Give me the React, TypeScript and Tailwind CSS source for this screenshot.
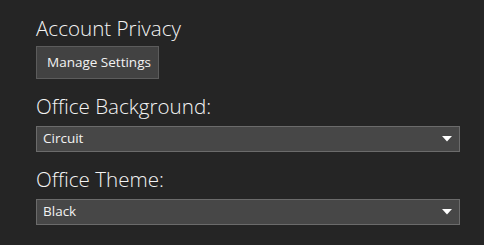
import React from "react";

function Caret() {
  return (
    <svg width="10" height="6" viewBox="0 0 10 6" className="shrink-0">
      <path d="M0 0 L10 0 L5 5.5 Z" fill="#ffffff" />
    </svg>
  );
}

function Dropdown({ value }: { value: string }) {
  return (
    <div className="flex h-[26px] w-[424px] items-center justify-between border border-[#6b6b6b] bg-[#474747] pl-[6px] pr-[7px]">
      <span className="text-[13.5px] leading-none text-[#f2f2f2]">{value}</span>
      <Caret />
    </div>
  );
}

export default function App() {
  return (
    <div
      className="flex h-[245px] w-[484px] flex-col bg-[#252525] pl-[36px] pt-[14px] text-white"
      style={{ fontFamily: '"Open Sans", "Noto Sans", sans-serif' }}
    >
      <div className="text-[20.6px] font-light leading-[28px] text-[#f4f4f4]">Account Privacy</div>
      <button className="mt-[4px] flex h-[33px] w-[123px] items-center border border-[#5c5c5c] bg-[#424242] pl-[10px] text-[13.5px] text-[#f2f2f2]">
        Manage Settings
      </button>
      <div className="mt-[13px] text-[20.6px] font-light leading-[28px] text-[#f4f4f4]">Office Background:</div>
      <div className="mt-[6px]">
        <Dropdown value="Circuit" />
      </div>
      <div className="mt-[13px] text-[20.6px] font-light leading-[28px] text-[#f4f4f4]">Office Theme:</div>
      <div className="mt-[6px]">
        <Dropdown value="Black" />
      </div>
    </div>
  );
}
